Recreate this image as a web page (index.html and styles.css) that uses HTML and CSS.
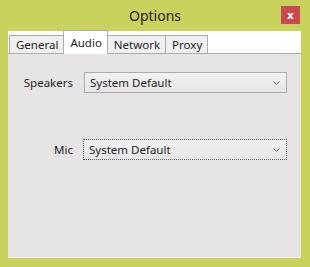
FILE: index.html
```html
<!DOCTYPE html>
<html>
<head>
    <title>Options</title>
    <link rel="stylesheet" href="styles.css">
</head>
<body>
    <div class="window">
        <div class="titlebar">
            <span></span>
            <span class="title">Options</span>
            <button class="close">x</button>
        </div>
        <div class="tabs">
            <div class="tab">General</div>
            <div class="tab selected">Audio</div>
            <div class="tab">Network</div>
            <div class="tab">Proxy</div>
        </div>
        <div class="panel">
            <div class="form">
                <label class="label">Speakers</label>
                <div class="combo">
                    <span>System Default</span>
                    <svg class="chevron" width="7" height="4" viewBox="0 0 7 4">
                        <path d="M0.5 0.5 L3.5 3.5 L6.5 0.5" fill="none" stroke="#666" stroke-width="1"/>
                    </svg>
                </div>
                <label class="label mic">Mic</label>
                <div class="combo focused">
                    <span>System Default</span>
                    <svg class="chevron" width="7" height="4" viewBox="0 0 7 4">
                        <path d="M0.5 0.5 L3.5 3.5 L6.5 0.5" fill="none" stroke="#666" stroke-width="1"/>
                    </svg>
                </div>
            </div>
        </div>
    </div>
</body>
</html>
```

FILE: styles.css
```css
body {
    margin: 0;
    padding: 0;
    font-family: "Noto Sans", "Open Sans", sans-serif;
    color: #1e1e1e;
}
.window {
    width: 310px;
    height: 267px;
    box-sizing: border-box;
    background-color: #c9d25d;
    display: flex;
    flex-direction: column;
    padding: 0 9px 9px 8px;
}
.titlebar {
    height: 31px;
    margin: 0 -9px 0 -8px;
    display: grid;
    grid-template-columns: 1fr auto 1fr;
    align-items: start;
}
.title {
    font-size: 14px;
    line-height: 31px;
    color: #222;
}
.close {
    justify-self: end;
    margin: 6px 10px 0 0;
    width: 19px;
    height: 18px;
    padding: 0;
    border: none;
    background-color: #c74a4f;
    color: #fff;
    font-family: "Noto Sans", sans-serif;
    font-size: 11px;
    font-weight: bold;
    line-height: 16px;
}
.tabs {
    height: 23px;
    background-color: #fff;
    display: flex;
    align-items: flex-end;
    padding-left: 1px;
    border-bottom: 1px solid #acacac;
    box-sizing: border-box;
}
.tab {
    height: 18px;
    box-sizing: border-box;
    border: 1px solid #acacac;
    border-bottom: none;
    background-color: #f0f0f0;
    font-size: 11.5px;
    line-height: 17px;
    padding: 0 5px 0 6px;
    margin-left: -1px;
}
.tab:first-child {
    margin-left: 0;
}
.tab.selected {
    height: 24px;
    margin-bottom: -1px;
    background-color: #fff;
    padding-top: 3px;
    position: relative;
    z-index: 1;
}
.panel {
    flex: 1;
    background-color: #e6e4e4;
    border-bottom: 1px solid #f2f2ee;
}
.form {
    display: grid;
    grid-template-columns: 65px 203px;
    column-gap: 11px;
    row-gap: 46px;
    padding-top: 18px;
    align-items: center;
}
.label {
    text-align: right;
    font-size: 11.5px;
}
.combo {
    height: 21px;
    box-sizing: border-box;
    border: 1px solid #acacac;
    background: linear-gradient(#f2f2f2, #e6e6e6);
    display: flex;
    align-items: center;
    justify-content: space-between;
    padding: 0 6px 0 5px;
    font-size: 11.5px;
}
.combo.focused {
    border: 1px dotted #555;
    margin-left: -1px;
}
```
